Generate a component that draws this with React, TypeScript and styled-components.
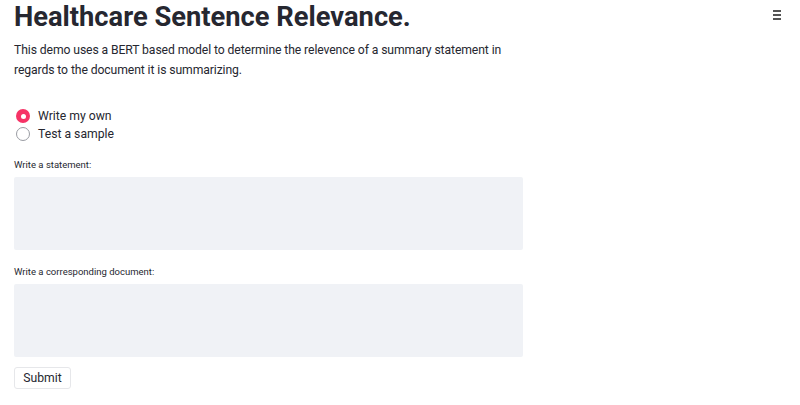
import React from "react";
import styled, { createGlobalStyle } from "styled-components";

const Global = createGlobalStyle`
  html, body { margin: 0; padding: 0; background: #ffffff; }
  body { font-family: Roboto, "Noto Sans", sans-serif; color: #262730; }
  * { box-sizing: border-box; }
`;

const Page = styled.div`
  width: 800px;
  height: 405px;
  position: relative;
  padding: 2px 0 0 14px;
  overflow: hidden;
`;

const Main = styled.main`
  width: 510px;
  display: flex;
  flex-direction: column;
`;

const Title = styled.h1`
  margin: 0;
  font-size: 27.3px;
  font-weight: 700;
  line-height: 30px;
  color: #262730;
`;

const Intro = styled.p`
  margin: 8px 0 0 0;
  font-size: 12.2px;
  letter-spacing: -0.1px;
  line-height: 20px;
  width: 500px;
`;

const RadioGroup = styled.div`
  margin-top: 27px;
  display: flex;
  flex-direction: column;
`;

const RadioRow = styled.label`
  display: flex;
  align-items: center;
  gap: 8px;
  height: 18px;
  font-size: 12.2px;
  padding-left: 2px;
`;

const Dot = styled.span<{ $on: boolean }>`
  width: 14px;
  height: 14px;
  border-radius: 50%;
  background: ${(p) => (p.$on ? "#f63366" : "#ffffff")};
  border: ${(p) => (p.$on ? "none" : "1px solid #9a9ca3")};
  display: flex;
  align-items: center;
  justify-content: center;
  &::after {
    content: "";
    display: ${(p) => (p.$on ? "block" : "none")};
    width: 5px;
    height: 5px;
    border-radius: 50%;
    background: #ffffff;
  }
`;

const Field = styled.div<{ $top: number }>`
  margin-top: ${(p) => p.$top}px;
  display: flex;
  flex-direction: column;
`;

const Label = styled.div`
  font-size: 9.5px;
  line-height: 14px;
  color: #262730;
  margin-bottom: 5px;
`;

const Area = styled.textarea`
  width: 509px;
  height: 73px;
  background: #f0f2f6;
  border: none;
  border-radius: 2px;
  resize: none;
  outline: none;
  font-family: inherit;
  display: block;
`;

const Submit = styled.button`
  margin-top: 10px;
  align-self: flex-start;
  height: 22px;
  width: 57px;
  padding: 0;
  background: #ffffff;
  border: 1px solid #e6e7ea;
  border-radius: 3px;
  font-family: inherit;
  font-size: 12.2px;
  color: #262730;
`;

const Menu = styled.div`
  position: absolute;
  top: 10px;
  right: 19px;
  width: 8px;
  display: flex;
  flex-direction: column;
  gap: 2.5px;
  span {
    display: block;
    height: 1.5px;
    background: #555;
  }
`;

export default function App() {
  return (
    <Page>
      <Global />
      <Main>
        <Title>Healthcare Sentence Relevance.</Title>
        <Intro>
          This demo uses a BERT based model to determine the relevence of a summary statement in regards to the document it is summarizing.
        </Intro>
        <RadioGroup>
          <RadioRow>
            <Dot $on={true} />
            Write my own
          </RadioRow>
          <RadioRow>
            <Dot $on={false} />
            Test a sample
          </RadioRow>
        </RadioGroup>
        <Field $top={15}>
          <Label>Write a statement:</Label>
          <Area />
        </Field>
        <Field $top={15}>
          <Label>Write a corresponding document:</Label>
          <Area />
        </Field>
        <Submit>Submit</Submit>
      </Main>
      <Menu>
        <span />
        <span />
        <span />
      </Menu>
    </Page>
  );
}
